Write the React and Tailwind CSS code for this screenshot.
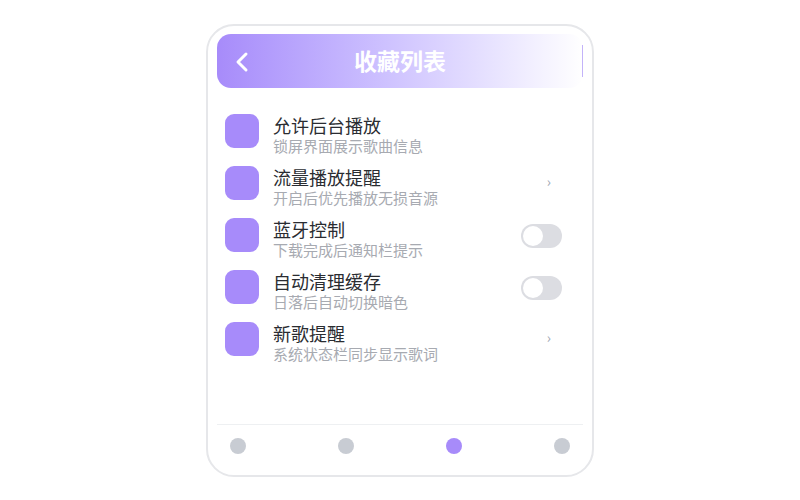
import React from "react";

const items = [
  { t: "允许后台播放", s: "锁屏界面展示歌曲信息", r: "none" },
  { t: "流量播放提醒", s: "开启后优先播放无损音源", r: "chev" },
  { t: "蓝牙控制", s: "下载完成后通知栏提示", r: "toggle" },
  { t: "自动清理缓存", s: "日落后自动切换暗色", r: "toggle" },
  { t: "新歌提醒", s: "系统状态栏同步显示歌词", r: "chev" },
];

const font = { fontFamily: '"Noto Sans CJK SC", "Noto Sans", sans-serif' };

export default function App() {
  return (
    <div className="w-[800px] h-[500px] bg-white flex items-center justify-center" style={font}>
      <div className="w-[388px] h-[453px] border-2 border-[#e6e7ea] rounded-[28px] bg-white flex flex-col px-[9px] pt-[8px] pb-0">
        <div className="h-[54px] rounded-[14px] bg-gradient-to-r from-[#a78bfa] to-[#ffffff] flex items-center relative shrink-0">
          <svg className="absolute left-[18px] top-[17px]" width="14" height="22" viewBox="0 0 14 22" fill="none">
            <polyline points="11,3 3,11 11,19" stroke="white" strokeWidth="3" strokeLinecap="round" strokeLinejoin="round" />
          </svg>
          <div className="flex-1 text-center text-white text-[23px] font-bold leading-none">收藏列表</div>
          <div className="absolute right-0 top-[11px] w-px h-[32px] bg-[#c3b3f9]" />
        </div>
        <div className="flex flex-col pt-[26px] px-[8px] flex-1">
          {items.map((it, i) => (
            <div key={i} className="h-[52px] flex items-start">
              <div className="w-[34px] h-[34px] rounded-[9px] bg-[#a78bfa] shrink-0" />
              <div className="ml-[14px] flex flex-col flex-1">
                <div className="text-[18px] leading-[22px] text-[#2a2c31]">{it.t}</div>
                <div className="text-[15px] leading-[18px] text-[#a7aab1] mt-px">{it.s}</div>
              </div>
              {it.r === "toggle" && (
                <div className="mt-[6px] mr-[13px] w-[41px] h-[24px] rounded-full bg-[#dcdde2] flex items-center px-[2px]">
                  <div className="w-[20px] h-[20px] rounded-full bg-white" />
                </div>
              )}
              {it.r === "chev" && (
                <div className="mt-[3px] mr-[24px] text-[14px] leading-[24px] text-[#9ca3af]">›</div>
              )}
            </div>
          ))}
        </div>
        <div className="border-t border-[#eef0f2] h-[51px] shrink-0 flex items-center justify-between px-[13px] pb-[7px]">
          <div className="w-[16px] h-[16px] rounded-full bg-[#c8ccd3]" />
          <div className="w-[16px] h-[16px] rounded-full bg-[#c8ccd3]" />
          <div className="w-[16px] h-[16px] rounded-full bg-[#a78bfa]" />
          <div className="w-[16px] h-[16px] rounded-full bg-[#c8ccd3]" />
        </div>
      </div>
    </div>
  );
}
